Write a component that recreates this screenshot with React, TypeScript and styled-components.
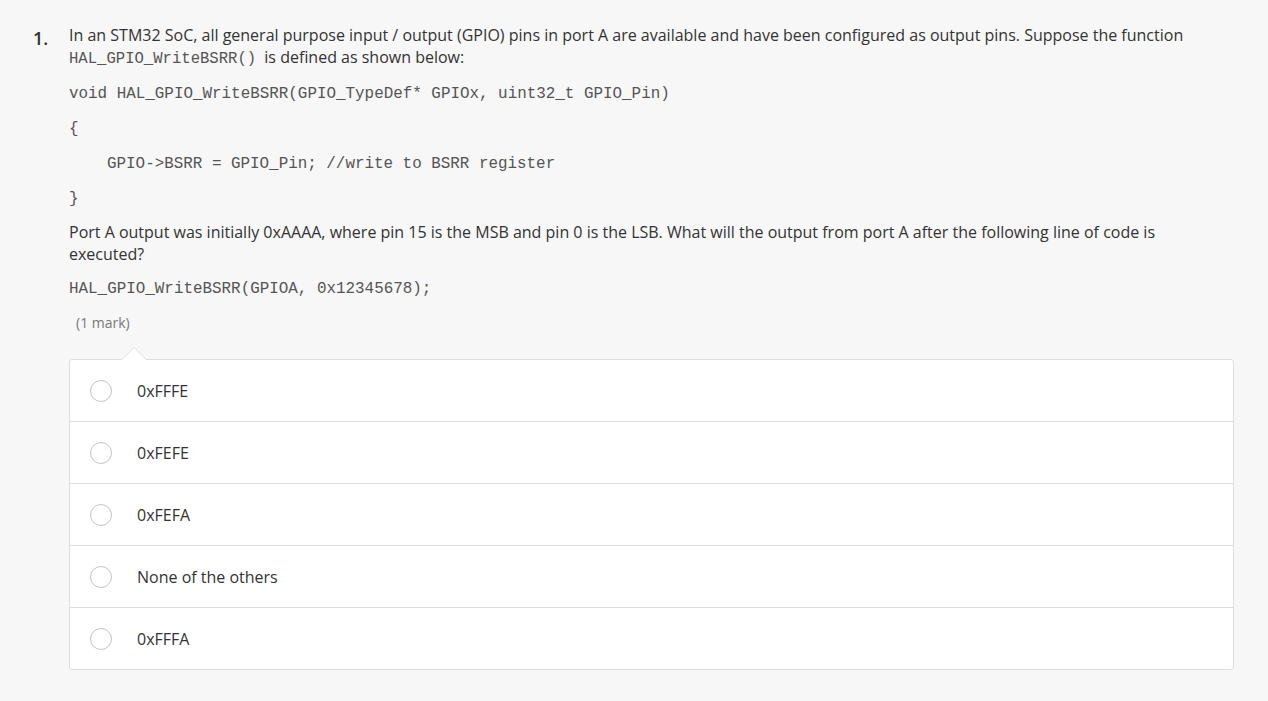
import React from 'react'
import styled, { createGlobalStyle } from 'styled-components'

const GlobalStyle = createGlobalStyle`
  html, body {
    margin: 0;
    padding: 0;
    background: #f7f7f7;
  }
  body {
    font-family: "Open Sans", "Liberation Sans", sans-serif;
    color: #333;
  }
`

const Page = styled.div`
  padding: 24px 0 0 33px;
`

const Question = styled.div`
  display: flex;
  align-items: flex-start;
`

const Number = styled.div`
  width: 36px;
  font-size: 18px;
  font-weight: 600;
  line-height: 22px;
  padding-top: 3px;
  color: #333;
`

const Body = styled.div`
  width: 1165px;
`

const Text = styled.p`
  margin: 0 0 13px;
  font-size: 16px;
  line-height: 22px;
  color: #333;
`

const InlineCode = styled.code`
  font-family: "Liberation Mono", "Courier New", monospace;
  font-size: 15.6px;
  color: #555;
  margin-right: 4px;
`

const CodeLine = styled.p<{ $indent?: number; $after?: number }>`
  margin: 0 0 ${p => p.$after ?? 13}px;
  padding-left: ${p => p.$indent ?? 0}px;
  font-family: "Liberation Mono", "Courier New", monospace;
  font-size: 15.9px;
  line-height: 22px;
  color: #555;
  white-space: pre;
`

const Mark = styled.div`
  margin: 0 0 25px 7px;
  font-size: 14px;
  line-height: 22px;
  color: #777;
`

const Options = styled.div`
  position: relative;
  background: #fff;
  border: 1px solid #dedede;
  border-radius: 3px;

  &::before,
  &::after {
    content: '';
    position: absolute;
    left: 52px;
    width: 0;
    height: 0;
    border-left: 12px solid transparent;
    border-right: 12px solid transparent;
  }
  &::before {
    top: -13px;
    border-bottom: 12px solid #dedede;
  }
  &::after {
    top: -12px;
    border-bottom: 12px solid #fff;
  }
`

const Option = styled.label`
  display: flex;
  align-items: center;
  height: 61px;
  padding-left: 20px;
  border-bottom: 1px solid #dedede;
  cursor: pointer;

  &:last-child {
    border-bottom: none;
  }
`

const Radio = styled.span`
  box-sizing: border-box;
  width: 22px;
  height: 22px;
  border-radius: 50%;
  border: 1px solid #c4c4c4;
  background: #fff;
  flex-shrink: 0;
`

const OptionText = styled.span`
  margin-left: 25px;
  font-size: 16px;
  color: #333;
`

const answers = ['0xFFFE', '0xFEFE', '0xFEFA', 'None of the others', '0xFFFA']

export default function App() {
  return (
    <>
      <GlobalStyle />
      <Page>
        <Question>
          <Number>1.</Number>
          <Body>
            <Text>
              In an STM32 SoC, all general purpose input / output (GPIO) pins in port A are available and have been
              configured as output pins. Suppose the function <InlineCode>HAL_GPIO_WriteBSRR()</InlineCode> is defined
              as shown below:
            </Text>
            <CodeLine>void HAL_GPIO_WriteBSRR(GPIO_TypeDef* GPIOx, uint32_t GPIO_Pin)</CodeLine>
            <CodeLine>{'{'}</CodeLine>
            <CodeLine $indent={38}>GPIO-&gt;BSRR = GPIO_Pin; //write to BSRR register</CodeLine>
            <CodeLine $after={11}>{'}'}</CodeLine>
            <Text>
              Port A output was initially 0xAAAA, where pin 15 is the MSB and pin 0 is the LSB. What will the output
              from port A after the following line of code is executed?
            </Text>
            <CodeLine $after={12}>HAL_GPIO_WriteBSRR(GPIOA, 0x12345678);</CodeLine>
            <Mark>(1 mark)</Mark>
            <Options>
              {answers.map(a => (
                <Option key={a}>
                  <Radio />
                  <OptionText>{a}</OptionText>
                </Option>
              ))}
            </Options>
          </Body>
        </Question>
      </Page>
    </>
  )
}
